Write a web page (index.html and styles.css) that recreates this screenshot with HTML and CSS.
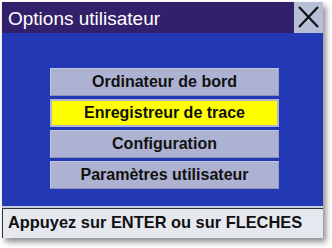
FILE: index.html
```html
<!DOCTYPE html>
<html>
<head>
<meta charset="utf-8">
<link rel="stylesheet" href="styles.css">
</head>
<body>
<div class="device">
  <div class="titlebar">
    <div class="title">Options utilisateur</div>
    <div class="close">
      <svg width="29" height="30" viewBox="0 0 29 30"><path d="M5 4 L24 24 M24 4 L5 24" stroke="#111" stroke-width="2.2" fill="none"/></svg>
    </div>
  </div>
  <div class="main">
    <div class="menu">
      <div class="btn">Ordinateur de bord</div>
      <div class="btn sel">Enregistreur de trace</div>
      <div class="btn">Configuration</div>
      <div class="btn">Paramètres utilisateur</div>
    </div>
  </div>
  <div class="status">Appuyez sur ENTER ou sur FLECHES</div>
</div>
</body>
</html>
```
FILE: styles.css
```css
html, body { margin: 0; padding: 0; background: #fff; }
body { width: 332px; height: 248px; overflow: hidden; font-family: "Liberation Sans", Arial, sans-serif; }
.device {
  margin: 2px 0 0 2px;
  width: 321px;
  height: 236px;
  display: flex;
  flex-direction: column;
  background: #c8ccd8;
  box-shadow: 3px 4px 6px rgba(0,0,0,0.45);
}
.titlebar {
  height: 31px;
  background: #33206a;
  display: flex;
  align-items: stretch;
}
.title {
  flex: 1;
  color: #fff;
  font-size: 19px;
  line-height: 31px;
  padding-left: 6px;
  padding-top: 1px;
}
.close {
  width: 29px;
  background: #b7bfd6;
  display: flex;
  align-items: center;
  justify-content: center;
}
.close svg { display: block; }
.main {
  height: 173px;
  background: #2238b4;
  box-sizing: border-box;
  padding: 35px 0 0 48px;
}
.menu {
  width: 229px;
  display: flex;
  flex-direction: column;
  gap: 3px;
}
.btn {
  height: 28px;
  box-sizing: border-box;
  background: #aeb2d2;
  border: 1px solid #c2c6dd;
  border-bottom-color: #8c90b4;
  border-right-color: #9a9ec0;
  color: #111;
  font-weight: bold;
  font-size: 16px;
  line-height: 26px;
  text-align: center;
}
.btn.sel {
  background: #ffff00;
  border: 2px solid #b0b4d2;
  line-height: 24px;
}
.status {
  margin-top: 2px;
  flex: 1;
  background: #e6e8f0;
  border-top: 1px solid #333;
  border-left: 1px solid #333;
  color: #111;
  font-weight: bold;
  font-size: 16.4px;
  line-height: 27px;
  padding-left: 5px;
}
```
